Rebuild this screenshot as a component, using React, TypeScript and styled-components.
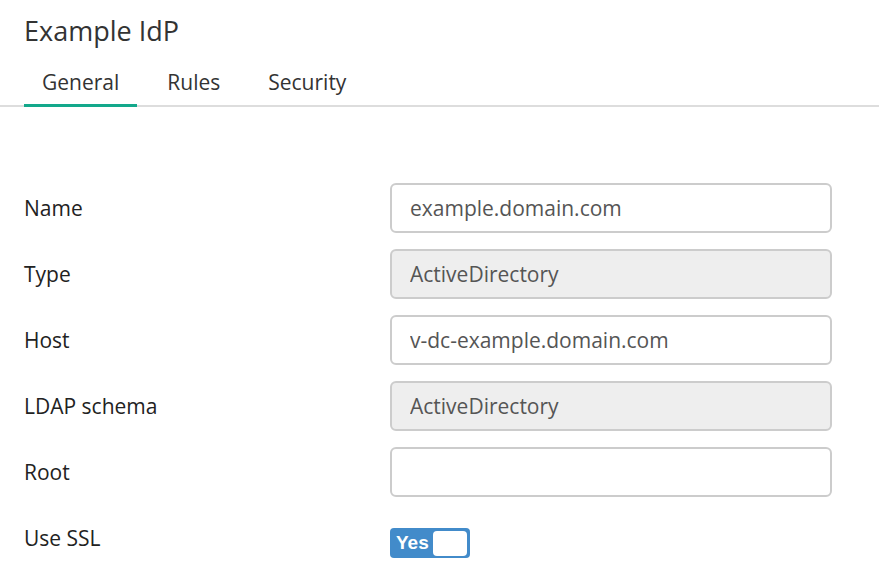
import React from 'react'
import styled, { createGlobalStyle } from 'styled-components'

const GlobalStyle = createGlobalStyle`
  html, body {
    margin: 0;
    padding: 0;
    background: #fff;
    font-family: "Open Sans", "Noto Sans", sans-serif;
    color: #333;
  }
`

const Page = styled.div`
  display: flex;
  flex-direction: column;
`

const Title = styled.h1`
  margin: 0;
  padding: 12px 24px 0;
  font-size: 27px;
  font-weight: 400;
  line-height: 38px;
  color: #333;
`

const TabBar = styled.div`
  display: flex;
  gap: 12px;
  margin-top: 17px;
  padding: 0 24px;
  border-bottom: 2px solid #ddd;
`

const Tab = styled.div<{ $active?: boolean }>`
  padding: 0 18px;
  font-size: 21px;
  line-height: 30px;
  height: 37px;
  color: #333;
  border-bottom: 3px solid ${p => (p.$active ? '#13a88b' : 'transparent')};
  margin-bottom: -2px;
  cursor: pointer;
`

const Form = styled.div`
  display: grid;
  grid-template-columns: 366px 442px;
  row-gap: 16px;
  padding: 76px 24px 0;
  align-items: center;
`

const Label = styled.div<{ $offset?: number }>`
  font-size: 21px;
  font-weight: 500;
  color: #222;
  margin-top: ${p => p.$offset ?? 0}px;
`

const Input = styled.input`
  box-sizing: border-box;
  width: 100%;
  height: 50px;
  padding: 0 18px;
  border: 2px solid #ccc;
  border-radius: 6px;
  font-family: "Open Sans", "Noto Sans", sans-serif;
  font-size: 21px;
  color: #555;
  background: ${p => (p.disabled ? '#eee' : '#fff')};
  outline: none;
`

const Toggle = styled.div<{ $on: boolean }>`
  display: flex;
  align-items: center;
  justify-content: space-between;
  box-sizing: border-box;
  width: 80px;
  height: 30px;
  padding: 3px 3px 3px 6px;
  margin-top: 15px;
  border-radius: 4px;
  background: ${p => (p.$on ? '#428bca' : '#ccc')};
  cursor: pointer;
`

const ToggleText = styled.span`
  font-family: "Liberation Sans", Arial, sans-serif;
  font-weight: 700;
  font-size: 19px;
  color: #fff;
`

const Knob = styled.span`
  width: 34px;
  height: 25px;
  border-radius: 4px;
  background: #fff;
`

const fields = [
  { label: 'Name', value: 'example.domain.com', disabled: false },
  { label: 'Type', value: 'ActiveDirectory', disabled: true },
  { label: 'Host', value: 'v-dc-example.domain.com', disabled: false },
  { label: 'LDAP schema', value: 'ActiveDirectory', disabled: true },
  { label: 'Root', value: '', disabled: false },
]

const App: React.FunctionComponent = () => {
  const [tab, setTab] = React.useState('General')
  const [ssl, setSsl] = React.useState(true)

  return (
    <Page>
      <GlobalStyle />
      <Title>Example IdP</Title>
      <TabBar>
        {['General', 'Rules', 'Security'].map(t => (
          <Tab key={t} $active={tab === t} onClick={() => setTab(t)}>
            {t}
          </Tab>
        ))}
      </TabBar>
      <Form>
        {fields.map(f => (
          <React.Fragment key={f.label}>
            <Label>{f.label}</Label>
            <Input defaultValue={f.value} disabled={f.disabled} />
          </React.Fragment>
        ))}
        <Label $offset={5}>Use SSL</Label>
        <Toggle $on={ssl} onClick={() => setSsl(!ssl)}>
          <ToggleText>{ssl ? 'Yes' : 'No'}</ToggleText>
          <Knob />
        </Toggle>
      </Form>
    </Page>
  )
}

export default App
